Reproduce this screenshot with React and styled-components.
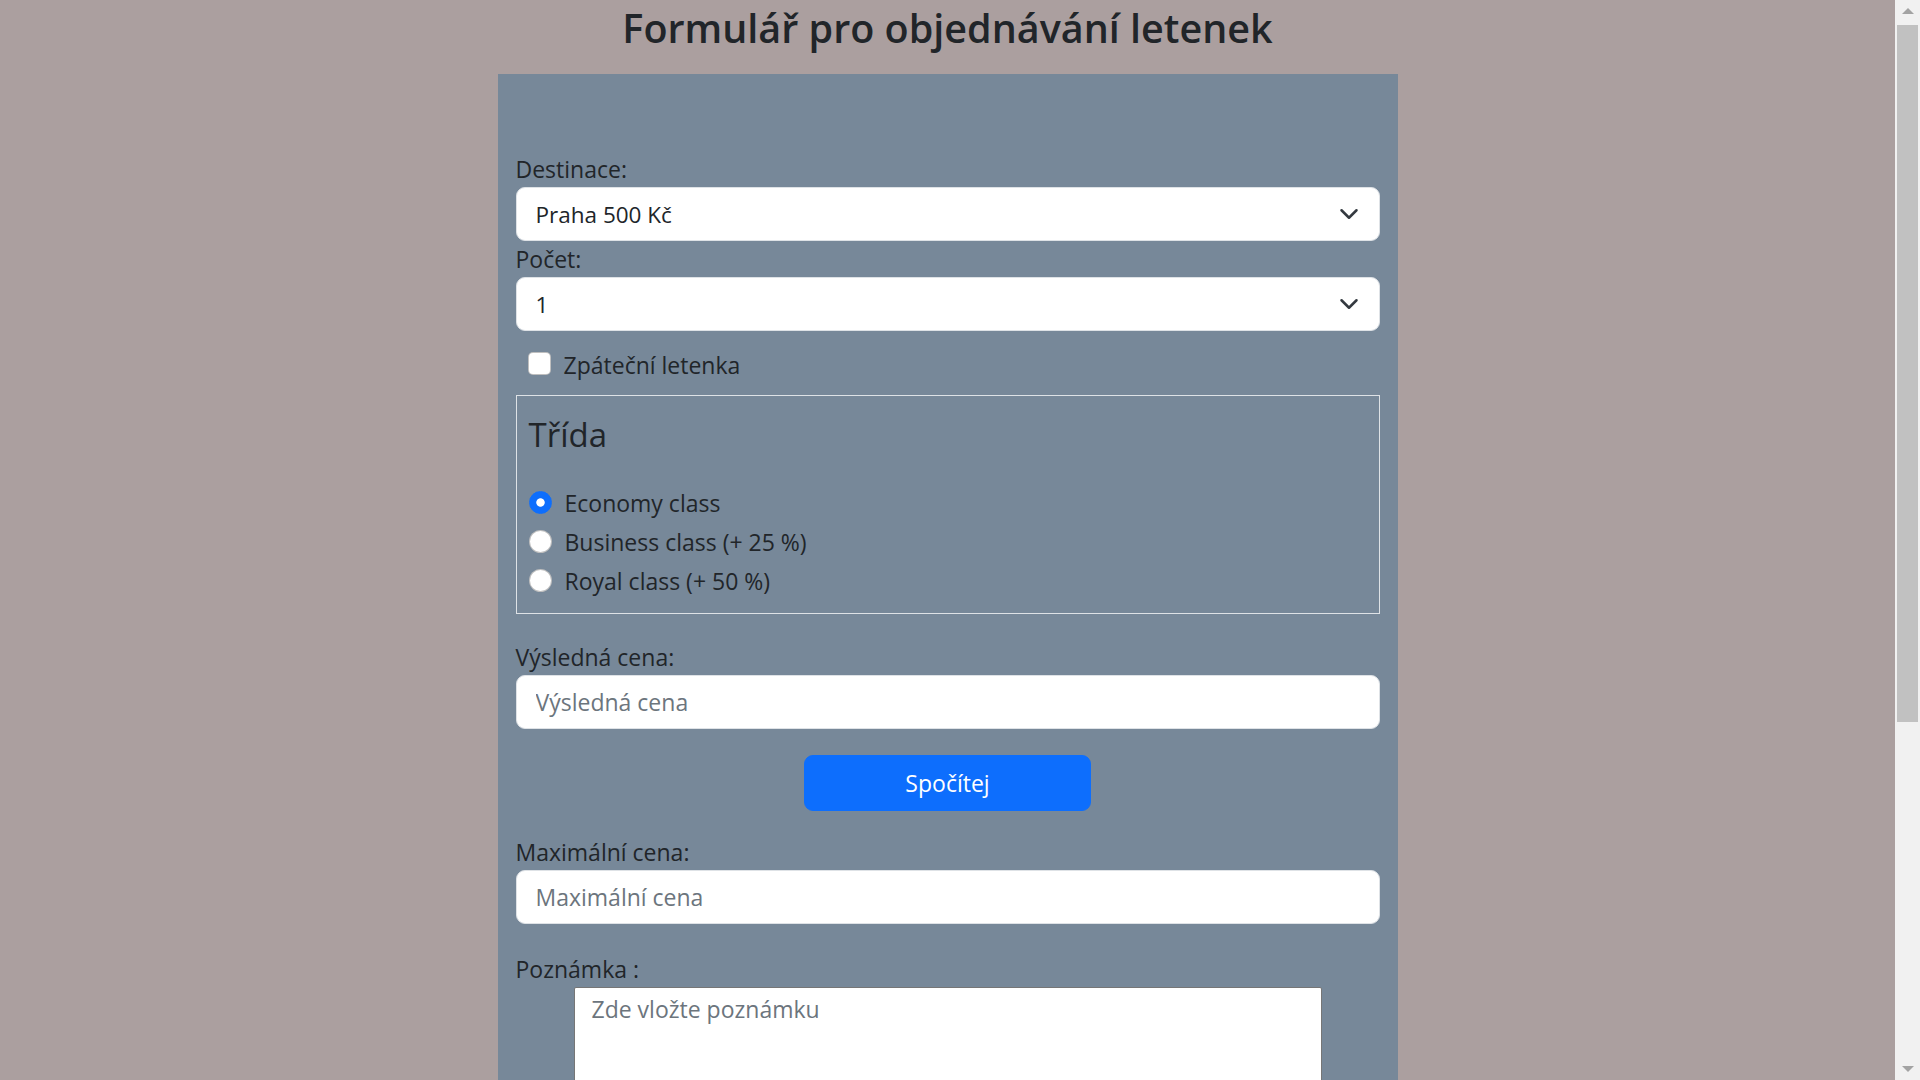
import React from 'react';
import styled, { createGlobalStyle } from 'styled-components';

const GlobalStyle = createGlobalStyle`
  html, body {
    margin: 0;
    padding: 0;
    background-color: #ab9f9f;
    overflow: hidden;
  }

  body {
    font-family: 'Open Sans', 'Noto Sans', sans-serif;
    color: #212529;
  }

  *, *::before, *::after {
    box-sizing: border-box;
  }
`;

const ChevronIcon = () => (
  <Chevron viewBox="0 0 16 16" aria-hidden="true">
    <path
      d="m2 5 6 6 6-6"
      fill="none"
      stroke="#343a40"
      strokeWidth="2"
      strokeLinecap="round"
      strokeLinejoin="round"
    />
  </Chevron>
);

const App = () => {
  return (
    <>
      <GlobalStyle />
      <Page>
        <Title>Formulář pro objednávání letenek</Title>
        <Panel>
          <Label htmlFor="destinace">Destinace:</Label>
          <SelectWrap>
            <Select id="destinace" defaultValue="praha">
              <option value="praha">Praha 500 Kč</option>
              <option value="brno">Brno 400 Kč</option>
              <option value="ostrava">Ostrava 600 Kč</option>
            </Select>
            <ChevronIcon />
          </SelectWrap>

          <Label htmlFor="pocet">Počet:</Label>
          <SelectWrap>
            <Select id="pocet" defaultValue="1">
              <option value="1">1</option>
              <option value="2">2</option>
              <option value="3">3</option>
              <option value="4">4</option>
            </Select>
            <ChevronIcon />
          </SelectWrap>

          <CheckRow>
            <Checkbox type="checkbox" id="zpatecni" />
            <CheckLabel htmlFor="zpatecni">Zpáteční letenka</CheckLabel>
          </CheckRow>

          <ClassFieldset>
            <Legend>Třída</Legend>
            <RadioGroup>
              <CheckRow $tight>
                <Radio type="radio" name="trida" id="economy" defaultChecked />
                <CheckLabel htmlFor="economy">Economy class</CheckLabel>
              </CheckRow>
              <CheckRow $tight>
                <Radio type="radio" name="trida" id="business" />
                <CheckLabel htmlFor="business">Business class (+ 25 %)</CheckLabel>
              </CheckRow>
              <CheckRow $tight>
                <Radio type="radio" name="trida" id="royal" />
                <CheckLabel htmlFor="royal">Royal class (+ 50 %)</CheckLabel>
              </CheckRow>
            </RadioGroup>
          </ClassFieldset>

          <Label htmlFor="cena" $gap={25}>Výsledná cena:</Label>
          <TextInput id="cena" type="text" placeholder="Výsledná cena" />

          <ButtonRow>
            <Button type="button">Spočítej</Button>
          </ButtonRow>

          <Label htmlFor="maxcena" $gap={23}>Maximální cena:</Label>
          <TextInput id="maxcena" type="text" placeholder="Maximální cena" />

          <Label htmlFor="poznamka" $gap={27}>Poznámka :</Label>
          <NoteArea id="poznamka" placeholder="Zde vložte poznámku" />
        </Panel>
      </Page>
      <ScrollTrack aria-hidden="true">
        <ScrollArrow />
        <ScrollThumb />
        <ScrollArrow $down />
      </ScrollTrack>
    </>
  );
};

const Page = styled.div`
  margin-right: 25px;
  min-height: 1080px;
`;

const Title = styled.h3`
  margin: 0 0 21px;
  padding-top: 3px;
  font-size: 39.5px;
  font-weight: 600;
  line-height: 50px;
  text-align: center;
  color: #212529;
`;

const Panel = styled.main`
  width: 900px;
  margin: 0 auto;
  padding: 77px 18px 60px;
  background-color: #778899;
`;

const Label = styled.label`
  display: block;
  margin-top: ${(p) => p.$gap || 0}px;
  font-size: 23px;
  line-height: 36px;
  color: #212529;
`;

const SelectWrap = styled.div`
  position: relative;
`;

const Select = styled.select`
  display: block;
  width: 100%;
  height: 54px;
  padding: 0 56px 0 19px;
  font-family: inherit;
  font-size: 22.5px;
  color: #212529;
  background-color: #fff;
  border: 1px solid #dee2e6;
  border-radius: 9px;
  appearance: none;
  outline: none;
`;

const Chevron = styled.svg`
  position: absolute;
  right: 21px;
  top: 50%;
  width: 20px;
  height: 20px;
  margin-top: -10px;
  pointer-events: none;
`;

const CheckRow = styled.div`
  display: flex;
  align-items: flex-start;
  gap: 13px;
  min-height: 36px;
  margin: ${(p) => (p.$tight ? '0 0 3px' : '16px 0 12px')};
  padding-left: ${(p) => (p.$tight ? '1px' : '12px')};
`;

const Checkbox = styled.input`
  flex: none;
  width: 23px;
  height: 23px;
  margin: 5px 0 0;
  appearance: none;
  background-color: #fff;
  border: 1px solid rgba(0, 0, 0, 0.25);
  border-radius: 5px;
`;

const Radio = styled.input`
  flex: none;
  width: 23px;
  height: 23px;
  margin: 6px 0 0;
  appearance: none;
  background-color: #fff;
  border: 1px solid rgba(0, 0, 0, 0.25);
  border-radius: 50%;

  &:checked {
    background: radial-gradient(circle, #fff 0 3.8px, #0d6efd 4.6px);
    border-color: #0d6efd;
  }
`;

const CheckLabel = styled.label`
  font-size: 23px;
  line-height: 36px;
  color: #212529;
`;

const ClassFieldset = styled.fieldset`
  margin: 0;
  min-width: 0;
  padding: 12px 11px 11px;
  border: 1px solid #dee2e6;
`;

const Legend = styled.legend`
  float: left;
  width: 100%;
  margin: 0 0 23px;
  padding: 0 0 0 1px;
  font-size: 33px;
  line-height: 54px;
  color: #212529;
`;

const RadioGroup = styled.div`
  clear: both;
`;

const TextInput = styled.input`
  display: block;
  width: 100%;
  height: 54px;
  padding: 0 19px;
  font-family: inherit;
  font-size: 23px;
  color: #212529;
  background-color: #fff;
  border: 1px solid #dee2e6;
  border-radius: 9px;
  outline: none;

  &::placeholder {
    color: #6c757d;
  }
`;

const ButtonRow = styled.div`
  display: flex;
  justify-content: center;
  margin-top: 26px;
`;

const Button = styled.button`
  width: calc(100% / 3);
  height: 56px;
  font-family: inherit;
  font-size: 23px;
  color: #fff;
  background-color: #0d6efd;
  border: 1px solid #0d6efd;
  border-radius: 9px;
  cursor: pointer;
`;

const NoteArea = styled.textarea`
  display: block;
  width: 748px;
  height: 170px;
  margin: 0 auto;
  padding: 5px 17px;
  font-family: inherit;
  font-size: 23px;
  color: #212529;
  background-color: #fff;
  border: 1px solid #767676;
  border-radius: 2px;
  resize: vertical;
  outline: none;

  &::placeholder {
    color: #6c757d;
  }
`;

const ScrollTrack = styled.div`
  position: fixed;
  top: 0;
  right: 0;
  width: 25px;
  height: 100vh;
  display: flex;
  flex-direction: column;
  align-items: center;
  background-color: #f1f1f1;
`;

const ScrollArrow = styled.div`
  flex: none;
  width: 25px;
  height: 25px;
  display: flex;
  align-items: center;
  justify-content: center;

  &::before {
    content: '';
    border-left: 6px solid transparent;
    border-right: 6px solid transparent;
    ${(p) => (p.$down ? 'border-top' : 'border-bottom')}: 6px solid #a3a3a3;
    margin-top: ${(p) => (p.$down ? '2px' : '-4px')};
  }
`;

const ScrollThumb = styled.div`
  width: 21px;
  height: 697px;
  margin-bottom: auto;
  background-color: #c1c1c1;
`;

export default App;
